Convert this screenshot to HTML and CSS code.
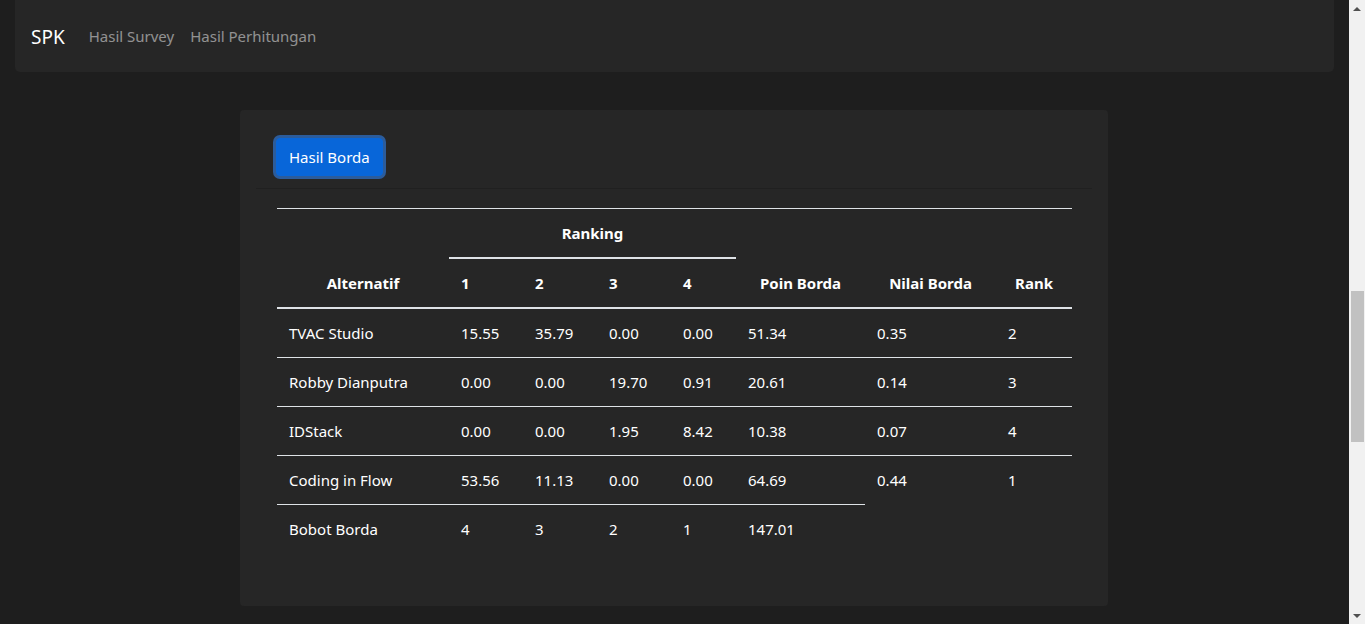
FILE: index.html
```html
<!DOCTYPE html>
<html lang="id">
<head>
<meta charset="utf-8">
<title>SPK - Hasil Perhitungan</title>
<link rel="stylesheet" href="styles.css">
</head>
<body>
<div class="viewport">
  <nav class="navbar">
    <a class="brand" href="#">SPK</a>
    <a class="nav-link" href="#">Hasil Survey</a>
    <a class="nav-link" href="#">Hasil Perhitungan</a>
  </nav>
  <main class="main">
    <section class="card">
      <div class="card-header">
        <button class="btn" type="button">Hasil Borda</button>
      </div>
      <div class="card-body">
        <table class="table">
          <colgroup>
            <col class="c-alt"><col class="c-r"><col class="c-r"><col class="c-r"><col class="c-r4"><col class="c-poin"><col class="c-nilai"><col class="c-rank">
          </colgroup>
          <thead>
            <tr>
              <th rowspan="2" class="center">Alternatif</th>
              <th colspan="4" class="center">Ranking</th>
              <th rowspan="2" class="center">Poin Borda</th>
              <th rowspan="2" class="center">Nilai Borda</th>
              <th rowspan="2" class="center">Rank</th>
            </tr>
            <tr>
              <th>1</th><th>2</th><th>3</th><th>4</th>
            </tr>
          </thead>
          <tbody>
            <tr><td>TVAC Studio</td><td>15.55</td><td>35.79</td><td>0.00</td><td>0.00</td><td>51.34</td><td>0.35</td><td>2</td></tr>
            <tr><td>Robby Dianputra</td><td>0.00</td><td>0.00</td><td>19.70</td><td>0.91</td><td>20.61</td><td>0.14</td><td>3</td></tr>
            <tr><td>IDStack</td><td>0.00</td><td>0.00</td><td>1.95</td><td>8.42</td><td>10.38</td><td>0.07</td><td>4</td></tr>
            <tr><td>Coding in Flow</td><td>53.56</td><td>11.13</td><td>0.00</td><td>0.00</td><td>64.69</td><td>0.44</td><td>1</td></tr>
            <tr><td>Bobot Borda</td><td>4</td><td>3</td><td>2</td><td>1</td><td>147.01</td></tr>
          </tbody>
        </table>
      </div>
    </section>
  </main>
</div>
<div class="scrollbar" aria-hidden="true">
  <div class="sb-arrow"><span class="tri-up"></span></div>
  <div class="sb-track"><div class="sb-thumb"></div></div>
  <div class="sb-arrow"><span class="tri-down"></span></div>
</div>
</body>
</html>
```
FILE: styles.css
```css
* { box-sizing: border-box; }

html, body {
  height: 100%;
}

body {
  margin: 0;
  background: #1e1e1e;
  color: #fff;
  font-family: "Segoe UI", "Noto Sans", "Liberation Sans", sans-serif;
  font-size: 15px;
  line-height: 24px;
  display: flex;
  overflow: hidden;
}

.viewport {
  flex: 1;
  display: flex;
  flex-direction: column;
  min-width: 0;
}

.navbar {
  margin: 0 15px;
  padding: 16px;
  height: 72px;
  background: #262626;
  border-radius: 0 0 5px 5px;
  display: flex;
  align-items: center;
}

.brand {
  color: #fff;
  text-decoration: none;
  font-size: 19px;
  line-height: 30px;
  padding: 6px 0 4px;
  margin-right: 16px;
}

.nav-link {
  color: rgba(255, 255, 255, 0.5);
  text-decoration: none;
  padding: 8px;
  line-height: 24px;
}

.main {
  padding: 38px 1px 0 0;
}

.card {
  width: 868px;
  margin: 0 auto;
  background: #262626;
  border-radius: 4px;
  padding: 16px;
}

.card-header {
  padding: 12px 20px;
  border-bottom: 1px solid #202020;
}

.btn {
  display: inline-block;
  font-family: inherit;
  font-size: 15px;
  line-height: 24px;
  padding: 6px 12px;
  color: #fff;
  background: #0866d9;
  border: 1px solid #0866d9;
  border-radius: 4px;
  box-shadow: 0 0 0 3px #2b5c9c;
  cursor: pointer;
}

.card-body {
  padding: 19px 20px 21px 21px;
}

.table {
  width: 100%;
  table-layout: fixed;
  border-collapse: collapse;
  margin-bottom: 16px;
  color: #fff;
}

.c-alt { width: 172px; }
.c-r { width: 74px; }
.c-r4 { width: 65px; }
.c-poin { width: 129px; }
.c-nilai { width: 131px; }
.c-rank { width: 76px; }

.table th,
.table td {
  padding: 12px;
  text-align: left;
  vertical-align: top;
  border-top: 1px solid #dee2e6;
  white-space: nowrap;
}

.table th {
  font-weight: 700;
}

.table thead th {
  vertical-align: bottom;
  border-bottom: 2px solid #dee2e6;
}

.table .center {
  text-align: center;
}

.table tbody tr:first-child td {
  border-top: 0;
}

.scrollbar {
  width: 16px;
  flex: none;
  background: #f1f1f1;
  display: flex;
  flex-direction: column;
}

.sb-arrow {
  height: 17px;
  display: flex;
  align-items: center;
  justify-content: center;
}

.tri-up,
.tri-down {
  width: 0;
  height: 0;
  border-left: 4px solid transparent;
  border-right: 4px solid transparent;
}

.tri-up { border-bottom: 4px solid #505050; }
.tri-down { border-top: 4px solid #505050; }

.sb-track {
  flex: 1;
  padding-top: 274px;
}

.sb-thumb {
  height: 151px;
  margin: 0 1px 0 2px;
  background: #c1c1c1;
}
```
